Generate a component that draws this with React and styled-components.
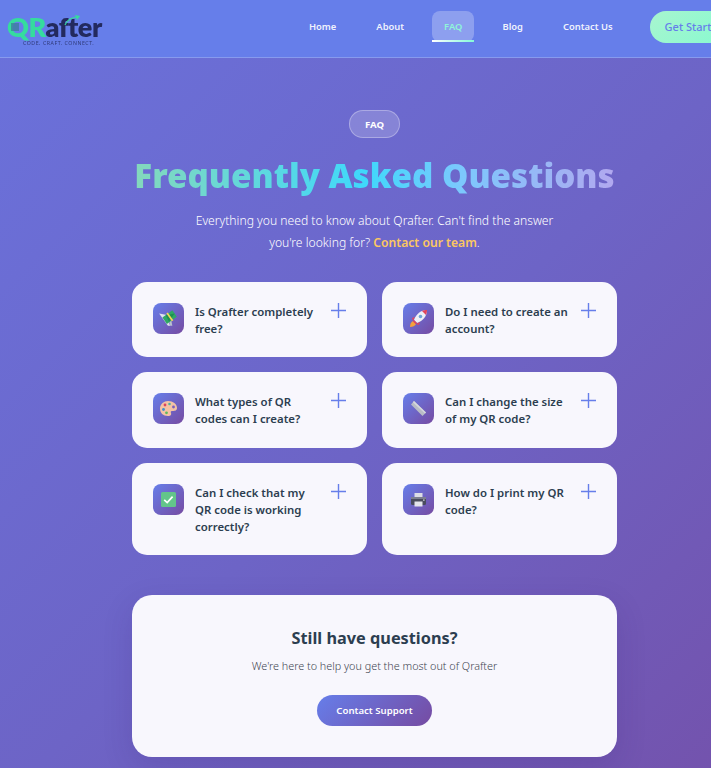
import React from 'react';
import styled, { createGlobalStyle } from 'styled-components';

const Global = createGlobalStyle`
  html, body { margin: 0; padding: 0; width: 711px; height: 768px; overflow: hidden; }
  body { font-family: "Noto Sans", "Open Sans", sans-serif; }
  * { box-sizing: border-box; }
`;

const Page = styled.div`
  width: 749px;
  min-height: 1040px;
  background: linear-gradient(135deg, #6a72dc 0%, #6d64c6 45%, #764ba2 100%);
`;

const Header = styled.header`
  height: 58px;
  display: flex;
  align-items: center;
  padding: 0 4px 4px 7px;
  background: #667eea;
  border-bottom: 1px solid rgba(255, 255, 255, 0.22);
`;

const Logo = styled.a`
  position: relative;
  display: flex;
  flex-direction: column;
  align-items: flex-start;
  width: 96px;
  filter: blur(0.35px);
`;

const LogoWord = styled.div`
  font-family: "Lato", "Noto Sans", sans-serif;
  font-weight: 800;
  font-size: 27px;
  line-height: 23px;
  letter-spacing: -0.5px;
  color: #232a5e;
  margin-top: 9px;
`;

const LogoAccent = styled.span`
  color: #35dc9e;
`;

const LogoTag = styled.div`
  font-family: "Noto Sans", sans-serif;
  font-size: 5.2px;
  line-height: 7px;
  letter-spacing: 0.55px;
  color: #2f3a78;
  margin: 2px 0 0 16px;
  white-space: nowrap;
`;

const LogoMark = styled.svg`
  position: absolute;
  left: 0;
  top: 0;
`;

const Nav = styled.nav`
  display: flex;
  align-items: center;
  gap: 16px;
  margin-left: 194px;
`;

const NavLink = styled.a`
  position: relative;
  display: flex;
  align-items: center;
  height: 31px;
  padding: 0 12px;
  border-radius: 8px;
  font-size: 9.4px;
  font-weight: 600;
  white-space: nowrap;
  color: ${(p) => (p.$active ? '#8ff5d8' : 'rgba(255,255,255,0.92)')};
  background: ${(p) => (p.$active ? 'rgba(255,255,255,0.26)' : 'transparent')};
  ${(p) =>
    p.$active &&
    `&::after {
      content: '';
      position: absolute;
      left: 0; right: 0; bottom: 0;
      height: 2px;
      background: linear-gradient(90deg, #ffffff, #84fad8);
    }`}
`;

const StartButton = styled.a`
  display: flex;
  align-items: center;
  height: 32px;
  margin-left: 25px;
  padding: 0 15px;
  border-radius: 16px;
  background: linear-gradient(135deg, #a8f5cf, #84fad0);
  color: #667eea;
  font-size: 11px;
  font-weight: 500;
  white-space: nowrap;
`;

const Main = styled.main`
  width: 485px;
  margin: 0 auto;
  padding-top: 52px;
  display: flex;
  flex-direction: column;
  align-items: center;
`;

const Badge = styled.div`
  width: 51px;
  height: 28px;
  display: flex;
  align-items: center;
  justify-content: center;
  border-radius: 14px;
  background: rgba(255, 255, 255, 0.18);
  border: 1px solid rgba(255, 255, 255, 0.3);
  color: #fff;
  font-size: 9.6px;
  font-weight: 700;
`;

const Title = styled.h1`
  margin: 17px 0 0;
  font-family: "Noto Sans", sans-serif;
  font-size: 33.15px;
  line-height: 42px;
  font-weight: 900;
  white-space: nowrap;
  color: transparent;
  background: linear-gradient(90deg, #84d8bc 0%, #3fd8fb 48%, #7cc8fd 68%, #b2a8ef 100%);
  -webkit-background-clip: text;
  background-clip: text;
`;

const Lead = styled.p`
  margin: 13px 0 0;
  text-align: center;
  color: #fff;
  font-size: 12.13px;
  font-weight: 300;
  line-height: 22px;
`;

const LeadLink = styled.a`
  color: #fcc761;
  font-weight: 600;
`;

const Grid = styled.div`
  margin-top: 28px;
  width: 100%;
  display: grid;
  grid-template-columns: 235px 235px;
  grid-template-rows: 75px 76px 92px;
  gap: 15px;
`;

const Card = styled.article`
  display: flex;
  align-items: flex-start;
  gap: 11px;
  padding: 21px;
  background: #f8f7fd;
  border-radius: 15px;
`;

const IconBox = styled.div`
  flex: none;
  width: 31px;
  height: 31px;
  border-radius: 8px;
  display: flex;
  align-items: center;
  justify-content: center;
  background: linear-gradient(135deg, #667eea, #764ba2);
`;

const Question = styled.h3`
  flex: 1;
  margin: 0;
  font-size: 11.4px;
  line-height: 17px;
  font-weight: 600;
  color: #2c3e50;
`;

const Plus = styled.svg`
  flex: none;
  display: block;
`;

const Cta = styled.section`
  margin-top: 40px;
  width: 100%;
  height: 162px;
  padding-top: 30px;
  display: flex;
  flex-direction: column;
  align-items: center;
  background: #f8f7fd;
  border-radius: 20px;
  box-shadow: 0 10px 30px rgba(50, 30, 110, 0.16);
`;

const CtaTitle = styled.h2`
  margin: 0;
  font-size: 16.3px;
  line-height: 26px;
  font-weight: 700;
  color: #2c3e50;
`;

const CtaText = styled.p`
  margin: 7px 0 0;
  font-size: 10.8px;
  line-height: 16px;
  font-weight: 300;
  color: #3e4450;
`;

const CtaButton = styled.a`
  margin-top: 21px;
  width: 115px;
  height: 31px;
  display: flex;
  align-items: center;
  justify-content: center;
  border-radius: 16px;
  background: linear-gradient(135deg, #667eea, #764ba2);
  color: #fff;
  font-size: 9.6px;
  font-weight: 600;
`;

const PlusIcon = () => (
  <Plus width="15" height="15" viewBox="0 0 15 15" fill="none" stroke="#667eea" strokeWidth="1.4">
    <path d="M7.5 0v15M0 7.500h15" />
  </Plus>
);

const MoneyIcon = () => (
  <svg width="21" height="21" viewBox="0 0 19 19">
    <path d="M1 5l6 1 4 10-2 0z" fill="#dfe3ec" />
    <path d="M11 6l2 10-2 0-2-8z" fill="#b8bfd0" />
    <path d="M4 8.500L13 2l4 6-9 6.500z" fill="#2fa866" />
    <path d="M7 6.500l8-1.500-5 7.500z" fill="#1f8f52" />
    <path d="M8.200 4.600l5 7" stroke="#f5d55a" strokeWidth="1.600" />
  </svg>
);

const RocketIcon = () => (
  <svg width="21" height="21" viewBox="0 0 21 21">
    <path d="M2 19c0-3 1-5 3-6l3 3c-1 2-3 3-6 3z" fill="#f5a13c" />
    <path d="M4 10l3-1-2 4zM11 17l1-3-4 2z" fill="#e0455c" />
    <path d="M6 12C8 6 13 2 19 2c0 6-4 11-10 13z" fill="#eef0f6" />
    <path d="M19 2c0 2-.4 3.400-1 5l-4-4c1.600-.6 3-1 5-1z" fill="#e0455c" />
    <circle cx="12.500" cy="8.500" r="1.800" fill="#6fa6d8" />
    <path d="M6 12l3 3-1.400 1-2.600-2.600z" fill="#e0455c" />
  </svg>
);

const PaletteIcon = () => (
  <svg width="19" height="19" viewBox="0 0 19 19">
    <path d="M9 2c5 0 9 3 9 7 0 3-3 3-5 3-1.500 0-1.500 1-1 2 .5 1.500 0 3-3 3-5 0-8-3-8-7.500S5 2 9 2z" fill="#f4c3a4" />
    <circle cx="6" cy="6" r="1.400" fill="#d9455f" />
    <circle cx="10.500" cy="5" r="1.300" fill="#4fb0a0" />
    <circle cx="14.500" cy="8" r="1.400" fill="#7a5fc0" />
    <circle cx="4.500" cy="10.500" r="1.400" fill="#3f8fd0" />
    <circle cx="7.500" cy="13.800" r="1.400" fill="#5fb85f" />
  </svg>
);

const RulerIcon = () => (
  <svg width="21" height="21" viewBox="0 0 21 21">
    <path d="M6 3l12 11.500-3.500 3.500L3 6.500z" fill="#b9bcc6" />
    <path d="M6 3l12 11.500-1 1L4.800 4.200z" fill="#d5d7de" />
  </svg>
);

const CheckIcon = () => (
  <svg width="17" height="17" viewBox="0 0 17 17">
    <rect x="1" y="1" width="15" height="15" rx="1.500" fill="#63c58a" />
    <path d="M4.200 8.800l3 2.800 5.400-6" fill="none" stroke="#fff" strokeWidth="1.700" />
  </svg>
);

const PrinterIcon = () => (
  <svg width="19" height="19" viewBox="0 0 19 19">
    <rect x="5.500" y="3" width="8" height="5" fill="#dcdde6" />
    <rect x="2" y="7" width="15" height="8" rx="1.500" fill="#4a4c5e" />
    <rect x="2" y="7" width="15" height="2" fill="#7c7e90" />
    <rect x="5.500" y="11.500" width="8" height="5" fill="#e4e4ec" />
    <rect x="14" y="9.500" width="1.600" height="1.200" fill="#d8d8e0" />
  </svg>
);

const faqs = [
  { q: 'Is Qrafter completely free?', icon: <MoneyIcon /> },
  { q: 'Do I need to create an account?', icon: <RocketIcon /> },
  { q: 'What types of QR codes can I create?', icon: <PaletteIcon /> },
  { q: 'Can I change the size of my QR code?', icon: <RulerIcon /> },
  { q: 'Can I check that my QR code is working correctly?', icon: <CheckIcon /> },
  { q: 'How do I print my QR code?', icon: <PrinterIcon /> },
];

const links = ['Home', 'About', 'FAQ', 'Blog', 'Contact Us'];

export default function App() {
  return (
    <Page>
      <Global />
      <Header>
        <Logo>
          <LogoWord>
            <LogoAccent>QR</LogoAccent>after
          </LogoWord>
          <LogoTag>CODE. CRAFT. CONNECT.</LogoTag>
          <LogoMark width="96" height="46" viewBox="0 0 96 46" fill="none">
            <path d="M51 19c2-5 7-8 14-8" stroke="#35dc9e" strokeWidth="1.200" transform="translate(7 0)" />
            <path d="M68 9l5 1-3 4z" fill="#35dc9e" />
            <rect x="4" y="17" width="8" height="8" fill="#3c7d9a" opacity="0.75" />
          </LogoMark>
        </Logo>
        <Nav>
          {links.map((l) => (
            <NavLink key={l} $active={l === 'FAQ'}>{l}</NavLink>
          ))}
        </Nav>
        <StartButton>Get Started</StartButton>
      </Header>
      <Main>
        <Badge>FAQ</Badge>
        <Title>Frequently Asked Questions</Title>
        <Lead>
          Everything you need to know about Qrafter. Can't find the answer
          <br />
          you're looking for? <LeadLink>Contact our team</LeadLink>.
        </Lead>
        <Grid>
          {faqs.map((f) => (
            <Card key={f.q}>
              <IconBox>{f.icon}</IconBox>
              <Question>{f.q}</Question>
              <PlusIcon />
            </Card>
          ))}
        </Grid>
        <Cta>
          <CtaTitle>Still have questions?</CtaTitle>
          <CtaText>We're here to help you get the most out of Qrafter</CtaText>
          <CtaButton>Contact Support</CtaButton>
        </Cta>
      </Main>
    </Page>
  );
}
